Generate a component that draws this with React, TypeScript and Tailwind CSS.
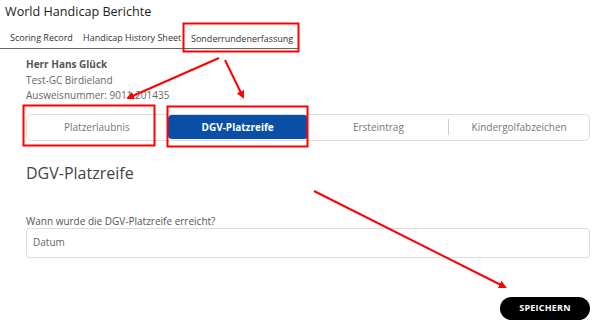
export default function App() {
  const font = { fontFamily: '"Open Sans", "Liberation Sans", sans-serif' };
  return (
    <div className="relative w-[605px] h-[326px] bg-white overflow-hidden text-[#333]" style={font}>
      <div className="pl-[5px] pt-[2px] text-[12.6px] leading-[20px] text-[#222]">World Handicap Berichte</div>

      {/* Tabs */}
      <div className="mt-[7px] flex w-[298px] border-b border-[#666] text-[9px] leading-[18px] font-medium text-[#333] whitespace-nowrap">
        <div className="pl-[10px] w-[83px]">Scoring Record</div>
        <div className="w-[108px]">Handicap History Sheet</div>
        <div className="pt-[1px]">Sonderrundenerfassung</div>
      </div>

      <div className="px-[26px] pt-[8px] w-[616px]">
        <div className="text-[10px] leading-[15.5px] font-bold text-[#555]">Herr Hans Glück</div>
        <div className="text-[10px] leading-[15.5px] text-[#666]">Test-GC Birdieland</div>
        <div className="text-[10px] leading-[15.5px] text-[#666]">Ausweisnummer: 9011 201435</div>

        {/* Segmented control */}
        <div className="mt-[10px] w-[564px] h-[27px] rounded-[5px] border border-[#ddd] flex items-center text-[10px] text-[#777]">
          <div className="flex-1 text-center">Platzerlaubnis</div>
          <div className="flex-1 h-[24px] mx-[1px] rounded-[4px] bg-[#0a4fa6] text-white font-bold flex items-center justify-center">DGV-Platzreife</div>
          <div className="flex-1 text-center">Ersteintrag</div>
          <div className="w-px h-[16px] bg-[#ccc]"></div>
          <div className="flex-1 text-center">Kindergolfabzeichen</div>
        </div>

        <div className="mt-[21px] text-[16px] leading-[22px] text-[#444]">DGV-Platzreife</div>

        <div className="mt-[31px] text-[10px] leading-[12px] text-[#555]">Wann wurde die DGV-Platzreife erreicht?</div>
        <div className="mt-[1px] w-[564px] h-[30px] rounded-[3px] border border-[#ddd] flex items-center px-[6px] text-[10px] text-[#666]">Datum</div>

        <div className="mt-[39px] w-[564px] flex justify-end">
          <button className="w-[90px] h-[23px] rounded-full bg-black text-white text-[9px] font-bold tracking-[0.2px]">SPEICHERN</button>
        </div>
      </div>

      {/* Annotation overlay */}
      <svg className="absolute left-0 top-0 pointer-events-none" width="605" height="326" viewBox="0 0 605 326">
        <defs>
          <marker id="ah" markerWidth="8" markerHeight="8" refX="6" refY="4" orient="auto" markerUnits="userSpaceOnUse">
            <path d="M0,0 L8,4 L0,8 z" fill="#f00" />
          </marker>
        </defs>
        <g fill="none" stroke="#f00" strokeWidth="2">
          <rect x="183.5" y="23.5" width="115" height="28" />
          <rect x="23.5" y="105.5" width="131" height="40" />
          <rect x="167.5" y="106.5" width="140" height="40" />
          <line x1="219" y1="58" x2="128" y2="98" markerEnd="url(#ah)" />
          <line x1="225" y1="60" x2="243" y2="97" markerEnd="url(#ah)" />
          <line x1="314" y1="191" x2="505" y2="287" markerEnd="url(#ah)" />
        </g>
      </svg>
    </div>
  );
}
